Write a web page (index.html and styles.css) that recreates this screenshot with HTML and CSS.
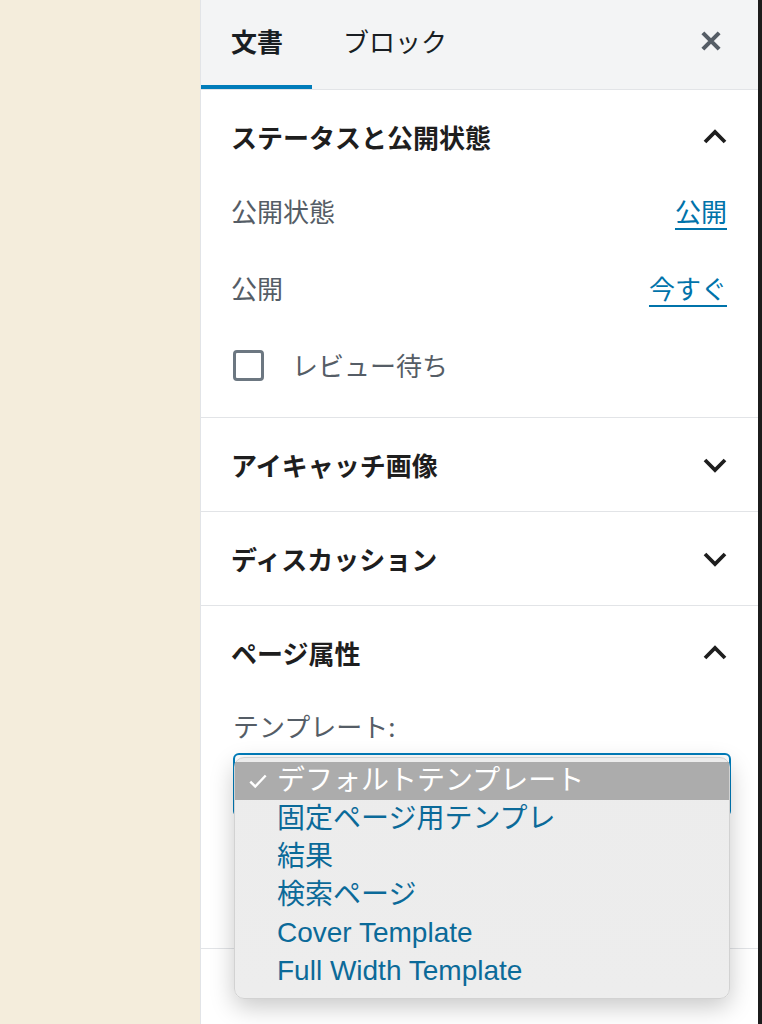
FILE: index.html
```html
<!DOCTYPE html>
<html lang="ja">
<head>
    <meta charset="UTF-8">
    <meta name="viewport" content="width=device-width, initial-scale=1.0">
    <title>文書設定</title>
    <link rel="stylesheet" href="styles.css">
</head>
<body>
    <div class="canvas"></div>

    <aside class="sidebar">
        <header class="sidebar-header">
            <button class="tab active">文書</button>
            <button class="tab">ブロック</button>
            <button class="close" aria-label="閉じる">
                <svg width="26" height="26" viewBox="0 0 24 24"><path d="M4.5 4.5l15 15M19.5 4.5l-15 15" stroke="#555d66" stroke-width="3.8" fill="none"/></svg>
            </button>
        </header>

        <section class="panel">
            <h2 class="panel-title">
                <span>ステータスと公開状態</span>
                <svg class="chevron" width="30" height="30" viewBox="0 0 24 24"><path d="M4 16l8-8 8 8" stroke="#1e1e1e" stroke-width="3" fill="none"/></svg>
            </h2>
            <div class="panel-body status">
                <div class="row">
                    <span class="label">公開状態</span>
                    <a href="#" class="link">公開</a>
                </div>
                <div class="row">
                    <span class="label">公開</span>
                    <a href="#" class="link">今すぐ</a>
                </div>
                <label class="row check">
                    <span class="box"></span>
                    <span class="label">レビュー待ち</span>
                </label>
            </div>
        </section>

        <section class="panel">
            <h2 class="panel-title">
                <span>アイキャッチ画像</span>
                <svg class="chevron" width="30" height="30" viewBox="0 0 24 24"><path d="M4 8l8 8 8-8" stroke="#1e1e1e" stroke-width="3" fill="none"/></svg>
            </h2>
        </section>

        <section class="panel">
            <h2 class="panel-title">
                <span>ディスカッション</span>
                <svg class="chevron" width="30" height="30" viewBox="0 0 24 24"><path d="M4 8l8 8 8-8" stroke="#1e1e1e" stroke-width="3" fill="none"/></svg>
            </h2>
        </section>

        <section class="panel">
            <h2 class="panel-title">
                <span>ページ属性</span>
                <svg class="chevron" width="30" height="30" viewBox="0 0 24 24"><path d="M4 16l8-8 8 8" stroke="#1e1e1e" stroke-width="3" fill="none"/></svg>
            </h2>
            <div class="panel-body attrs">
                <div class="field-label">テンプレート:</div>
                <div class="select-wrap">
                    <div class="select"></div>
                    <ul class="dropdown">
                        <li class="selected">
                            <svg class="tick" width="22" height="22" viewBox="0 0 20 20"><path d="M3 10.5l4.5 4.5L17 5" stroke="#fff" stroke-width="2.2" fill="none"/></svg>
                            デフォルトテンプレート
                        </li>
                        <li>固定ページ用テンプレ</li>
                        <li>結果</li>
                        <li>検索ページ</li>
                        <li>Cover Template</li>
                        <li>Full Width Template</li>
                    </ul>
                </div>
            </div>
        </section>

        <section class="panel last"></section>
    </aside>

    <div class="edge"></div>
</body>
</html>
```

FILE: styles.css
```css
*{
    box-sizing: border-box;
    margin: 0;
    padding: 0;
}
body{
    display: flex;
    height: 1024px;
    overflow: hidden;
    font-family: "Noto Sans CJK JP", sans-serif;
    background: #fff;
}
.canvas{
    width: 200px;
    flex-shrink: 0;
    background: #f4eddc;
}
.edge{
    width: 4px;
    flex-shrink: 0;
    background: #1c1c1c;
}
.sidebar{
    width: 558px;
    flex-shrink: 0;
    border-left: 1px solid #e2e4e7;
    background: #fff;
}

/* tabs */
.sidebar-header{
    display: flex;
    align-items: stretch;
    height: 90px;
    background: #f3f4f5;
    border-bottom: 1px solid #e2e4e7;
}
.tab{
    border: none;
    background: none;
    font-family: inherit;
    font-size: 26px;
    line-height: 30px;
    color: #191e23;
    padding: 0 29px 8px 30px;
}
.tab.active{
    font-weight: bold;
    box-shadow: inset 0 -4px 0 #007cba;
}
.tab + .tab{
    padding-left: 31px;
}
.close{
    margin-left: auto;
    border: none;
    background: none;
    width: 60px;
    margin-right: 17px;
    padding-bottom: 8px;
    display: flex;
    align-items: center;
    justify-content: center;
}

/* panels */
.panel{
    border-bottom: 1px solid #e2e4e7;
}
.panel.last{
    border-bottom: none;
}
.panel-title{
    height: 93px;
    display: flex;
    align-items: center;
    justify-content: space-between;
    padding: 0 28px 0 30px;
    font-size: 26px;
    font-weight: bold;
    color: #1e1e1e;
    line-height: 30px;
}
.panel-body{
    padding: 0 31px 0 30px;
}
.status{
    display: flex;
    flex-direction: column;
    gap: 21px;
    padding-bottom: 24px;
}
.row{
    height: 56px;
    display: flex;
    align-items: center;
    justify-content: space-between;
    font-size: 26px;
    line-height: 30px;
}
.label{
    color: #555d66;
}
.link{
    color: #0073aa;
    text-decoration: underline;
    text-underline-offset: 6px;
    text-decoration-thickness: 2px;
}
.row.check{
    justify-content: flex-start;
    gap: 28px;
    padding-left: 2px;
}
.box{
    width: 31px;
    height: 31px;
    border: 3px solid #6c7781;
    border-radius: 4px;
}

/* page attributes */
.attrs{
    padding: 12px 27px 131px 32px;
}
.field-label{
    font-size: 26px;
    line-height: 30px;
    color: #555d66;
}
.select-wrap{
    position: relative;
    margin-top: 12px;
}
.select{
    height: 64px;
    border: 2px solid #007cba;
    border-radius: 6px;
    background: #fff;
}
.dropdown{
    position: absolute;
    top: 4px;
    left: 1px;
    right: 1px;
    list-style: none;
    padding: 4px 0 8px;
    background: linear-gradient(#ececec, #ededed);
    border: 1px solid #d2d2d2;
    border-radius: 10px;
    box-shadow: 0 8px 24px rgba(0, 0, 0, 0.22);
    font-family: "Liberation Sans", "Noto Sans CJK JP", sans-serif;
    font-size: 28px;
}
.dropdown li{
    position: relative;
    height: 38px;
    line-height: 38px;
    padding-left: 42px;
    color: #0b6a99;
    white-space: nowrap;
}
.dropdown li.selected{
    background: #acacac;
    color: #fff;
}
.tick{
    position: absolute;
    left: 12px;
    top: 8px;
}
```
